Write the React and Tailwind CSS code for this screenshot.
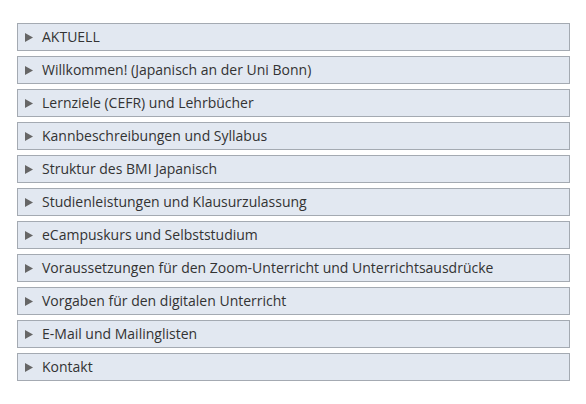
const ITEMS = [
  'AKTUELL',
  'Willkommen! (Japanisch an der Uni Bonn)',
  'Lernziele (CEFR) und Lehrbücher',
  'Kannbeschreibungen und Syllabus',
  'Struktur des BMI Japanisch',
  'Studienleistungen und Klausurzulassung',
  'eCampuskurs und Selbststudium',
  'Voraussetzungen für den Zoom-Unterricht und Unterrichtsausdrücke',
  'Vorgaben für den digitalen Unterricht',
  'E-Mail und Mailinglisten',
  'Kontakt',
]

function Arrow() {
  return (
    <svg width="8" height="9" viewBox="0 0 8 9" className="shrink-0">
      <path d="M0 0L8 4.5L0 9Z" fill="#666" />
    </svg>
  )
}

export default function App() {
  return (
    <div className="w-[586px] h-[404px] bg-white pt-[23px] pl-[17px] font-['Open_Sans',sans-serif]">
      <div className="w-[553px] flex flex-col gap-[5px]">
        {ITEMS.map((label) => (
          <div
            key={label}
            className="h-[28px] flex items-center gap-[9px] pl-[7px] bg-[#e2e8f1] border border-[#a4aab2] text-[14px] text-[#333] cursor-pointer"
          >
            <Arrow />
            <span className="leading-none">{label}</span>
          </div>
        ))}
      </div>
    </div>
  )
}
